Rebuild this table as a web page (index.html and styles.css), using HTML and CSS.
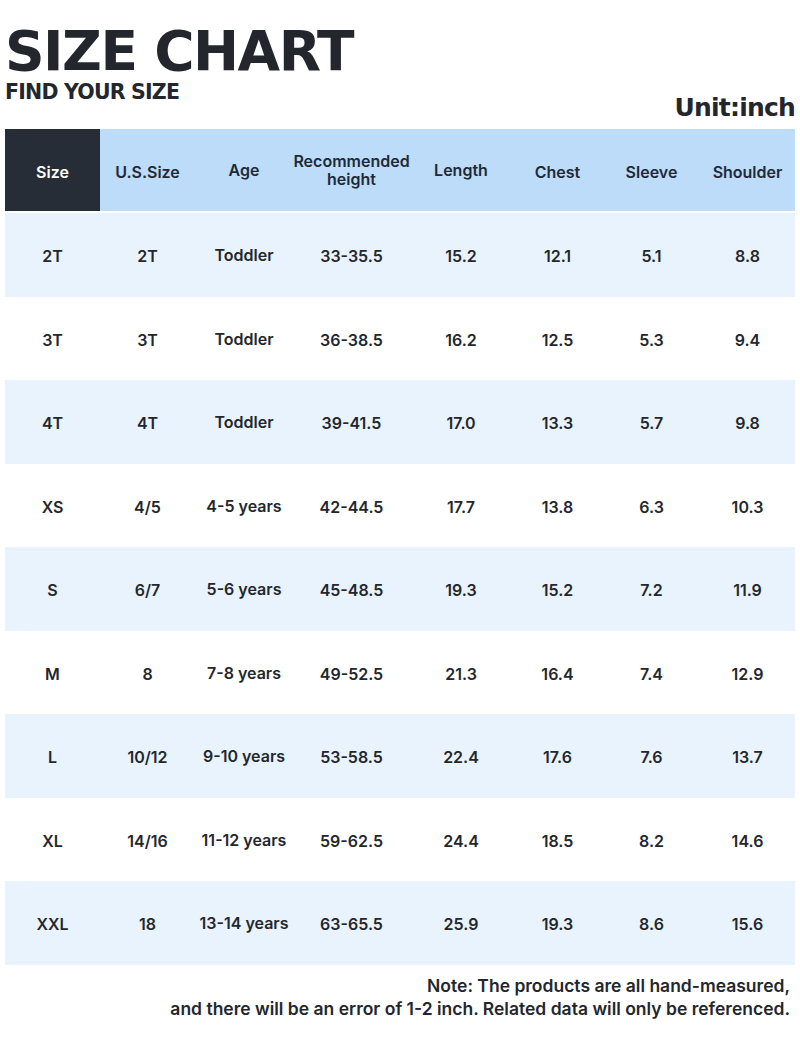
FILE: index.html
```html
<!DOCTYPE html>
<html>
<head>
<meta charset="utf-8">
<link rel="stylesheet" href="styles.css">
</head>
<body>
<div class="page">
  <header class="top">
    <div class="titles">
      <h1 class="title">SIZE CHART</h1>
      <div class="subtitle">FIND YOUR SIZE</div>
    </div>
    <div class="unit">Unit:inch</div>
  </header>
  <table class="chart">
    <colgroup>
      <col class="c1"><col class="c2"><col class="c3"><col class="c4"><col class="c5"><col class="c6"><col class="c7"><col class="c8">
    </colgroup>
    <thead>
      <tr>
        <th class="dark">Size</th>
        <th>U.S.Size</th>
        <th class="up">Age</th>
        <th class="up">Recommended<br>height</th>
        <th class="up">Length</th>
        <th>Chest</th>
        <th>Sleeve</th>
        <th>Shoulder</th>
      </tr>
    </thead>
    <tbody>
      <tr class="alt"><td>2T</td><td>2T</td><td class="up">Toddler</td><td>33-35.5</td><td>15.2</td><td>12.1</td><td>5.1</td><td>8.8</td></tr>
      <tr><td>3T</td><td>3T</td><td class="up">Toddler</td><td>36-38.5</td><td>16.2</td><td>12.5</td><td>5.3</td><td>9.4</td></tr>
      <tr class="alt"><td>4T</td><td>4T</td><td class="up">Toddler</td><td>39-41.5</td><td>17.0</td><td>13.3</td><td>5.7</td><td>9.8</td></tr>
      <tr><td>XS</td><td>4/5</td><td class="up">4-5 years</td><td>42-44.5</td><td>17.7</td><td>13.8</td><td>6.3</td><td>10.3</td></tr>
      <tr class="alt"><td>S</td><td>6/7</td><td class="up">5-6 years</td><td>45-48.5</td><td>19.3</td><td>15.2</td><td>7.2</td><td>11.9</td></tr>
      <tr><td>M</td><td>8</td><td class="up">7-8 years</td><td>49-52.5</td><td>21.3</td><td>16.4</td><td>7.4</td><td>12.9</td></tr>
      <tr class="alt"><td>L</td><td>10/12</td><td class="up">9-10 years</td><td>53-58.5</td><td>22.4</td><td>17.6</td><td>7.6</td><td>13.7</td></tr>
      <tr><td>XL</td><td>14/16</td><td class="up">11-12 years</td><td>59-62.5</td><td>24.4</td><td>18.5</td><td>8.2</td><td>14.6</td></tr>
      <tr class="alt"><td>XXL</td><td>18</td><td class="up">13-14 years</td><td>63-65.5</td><td>25.9</td><td>19.3</td><td>8.6</td><td>15.6</td></tr>
    </tbody>
  </table>
  <p class="note">Note: The products are all hand-measured,<br>and there will be an error of 1-2 inch. Related data will only be referenced.</p>
</div>
</body>
</html>
```
FILE: styles.css
```css
* { box-sizing: border-box; }
html, body { margin: 0; padding: 0; background: #ffffff; }
body {
  font-family: "Inter", "DejaVu Sans", sans-serif;
  color: #23272d;
  width: 800px;
  height: 1040px;
  overflow: hidden;
}
.page { padding: 0 5px; }
.top {
  display: flex;
  justify-content: space-between;
  align-items: flex-end;
  height: 129px;
  padding-bottom: 7px;
}
.titles {
  align-self: flex-start;
  display: flex;
  flex-direction: column;
  padding-top: 22px;
}
.title {
  margin: 0;
  font-family: "DejaVu Sans", sans-serif;
  font-weight: 700;
  font-size: 55px;
  line-height: 58px;
  letter-spacing: -1.5px;
  color: #23272d;
}
.subtitle {
  font-family: "DejaVu Sans", sans-serif;
  font-weight: 700;
  font-size: 20.5px;
  line-height: 22px;
  letter-spacing: -0.8px;
  margin-top: 1px;
  color: #23272d;
}
.unit {
  font-family: "DejaVu Sans", sans-serif;
  font-weight: 700;
  font-size: 25px;
  line-height: 28px;
  letter-spacing: -0.8px;
  color: #23272d;
}
.chart {
  width: 790px;
  border-collapse: separate;
  border-spacing: 0;
  table-layout: fixed;
}
.c1 { width: 95px; }
.c2 { width: 95px; }
.c3 { width: 98px; }
.c4 { width: 117px; }
.c5 { width: 102px; }
.c6 { width: 91px; }
.c7 { width: 97px; }
.c8 { width: 95px; }
.chart th {
  height: 84px;
  background: #bcdcfa;
  font-weight: 600;
  font-size: 16px;
  line-height: 18px;
  text-align: center;
  vertical-align: middle;
  padding: 3px 0 0 0;
  color: #1f2a36;
  border-bottom: 2px solid #ffffff;
}
.chart th.up { padding: 0; }
.chart th.dark { background: #262d36; color: #ffffff; }
.chart td {
  height: 83.5px;
  text-align: center;
  vertical-align: middle;
  font-weight: 600;
  font-size: 16px;
  padding: 3px 0 0 0;
  color: #23272d;
}
.chart td.up { padding-top: 1px; }
.chart tr.alt td { background: #e9f3fd; }
.note {
  margin: 9px 5px 0 0;
  text-align: right;
  font-weight: 600;
  font-size: 17.5px;
  line-height: 23px;
  color: #23272d;
}
```
